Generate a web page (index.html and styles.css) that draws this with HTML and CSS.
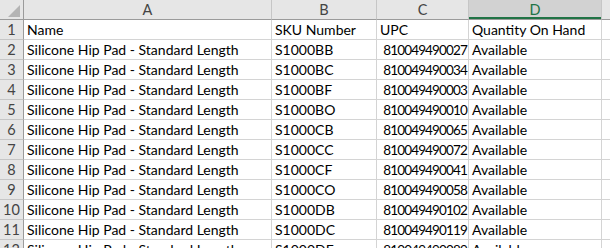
FILE: index.html
```html
<!DOCTYPE html>
<html lang="en">
<head>
  <meta charset="UTF-8" />
  <title>Inventory Sheet</title>
  <link rel="stylesheet" href="styles.css">
</head>
<body>
  <div class="sheet" id="sheet">
    <div class="corner"><span class="tri"></span></div>
    <div class="colhead">A</div>
    <div class="colhead">B</div>
    <div class="colhead">C</div>
    <div class="colhead active">D</div>
    <div class="colhead"></div>
  </div>

  <script>
    const rows = [
      ['Name', 'SKU Number', 'UPC', 'Quantity On Hand', true],
      ['Silicone Hip Pad - Standard Length', 'S1000BB', '810049490027', 'Available'],
      ['Silicone Hip Pad - Standard Length', 'S1000BC', '810049490034', 'Available'],
      ['Silicone Hip Pad - Standard Length', 'S1000BF', '810049490003', 'Available'],
      ['Silicone Hip Pad - Standard Length', 'S1000BO', '810049490010', 'Available'],
      ['Silicone Hip Pad - Standard Length', 'S1000CB', '810049490065', 'Available'],
      ['Silicone Hip Pad - Standard Length', 'S1000CC', '810049490072', 'Available'],
      ['Silicone Hip Pad - Standard Length', 'S1000CF', '810049490041', 'Available'],
      ['Silicone Hip Pad - Standard Length', 'S1000CO', '810049490058', 'Available'],
      ['Silicone Hip Pad - Standard Length', 'S1000DB', '810049490102', 'Available'],
      ['Silicone Hip Pad - Standard Length', 'S1000DC', '810049490119', 'Available'],
      ['Silicone Hip Pad - Standard Length', 'S1000DF', '810049490089', 'Available']
    ];

    const sheet = document.getElementById('sheet');
    rows.forEach((r, i) => {
      const isHeader = r[4] === true;
      sheet.insertAdjacentHTML('beforeend', `
        <div class="rowhead">${i + 1}</div>
        <div class="cell">${r[0]}</div>
        <div class="cell">${r[1]}</div>
        <div class="cell ${isHeader ? '' : 'num'}">${r[2]}</div>
        <div class="cell">${r[3]}</div>
        <div class="cell"></div>
      `);
    });
  </script>
</body>
</html>
```

FILE: styles.css
```css
body {
  margin: 0;
  background: #fff;
  overflow: hidden;
  font-family: Lato, "Liberation Sans", Arial, sans-serif;
}
.sheet {
  display: grid;
  grid-template-columns: 24px 248px 105px 92px 133px 40px;
  grid-auto-rows: 20px;
}
.sheet > div {
  box-sizing: border-box;
  border-right: 1px solid #d4d4d4;
  border-bottom: 1px solid #d4d4d4;
  white-space: nowrap;
  overflow: hidden;
}
.corner {
  background: #e6e6e6;
  position: relative;
}
.sheet > .corner,
.sheet > .colhead {
  border-bottom-color: #9b9b9b;
}
.sheet > .corner {
  border-right-color: #9b9b9b;
}
.sheet > .colhead {
  border-right-color: #c6c6c6;
}
.tri {
  position: absolute;
  right: 3px;
  bottom: 2px;
  width: 0;
  height: 0;
  border-left: 12px solid transparent;
  border-bottom: 12px solid #b4b4b4;
}
.colhead {
  background: #e6e6e6;
  color: #444;
  font-size: 14.5px;
  text-align: center;
  line-height: 19px;
}
.colhead.active {
  background: #d2d2d2;
  color: #217346;
  box-shadow: inset 0 -2px 0 #217346;
}
.rowhead {
  background: #e6e6e6;
  color: #444;
  font-size: 14.5px;
  text-align: center;
  line-height: 20px;
}
.sheet > .rowhead {
  border-right-color: #9b9b9b;
  border-bottom-color: #c6c6c6;
}
.cell {
  color: #000;
  font-size: 14px;
  line-height: 20px;
  padding: 0 3px;
}
.cell.num {
  text-align: right;
  padding-right: 1px;
  font-size: 13.5px;
  letter-spacing: -0.85px;
}
```
